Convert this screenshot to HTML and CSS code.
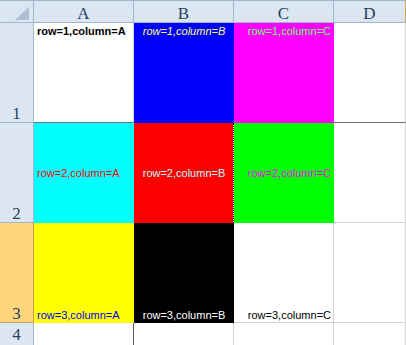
FILE: index.html
```html
<!DOCTYPE html>
<html>
  <head>
    <meta charset="utf-8">
    <title>Sheet1</title>
    <link rel="stylesheet" href="styles.css">
  </head>
  <body>
    <div class="sheet">
      <!-- column headers -->
      <div class="corner">
        <svg width="14" height="13" viewBox="0 0 14 13"><polygon points="14,0 14,13 0,13" fill="#aebfd4"/></svg>
      </div>
      <div class="col-head">A</div>
      <div class="col-head">B</div>
      <div class="col-head">C</div>
      <div class="col-head last">D</div>

      <!-- row 1 -->
      <div class="row-head">1</div>
      <div class="cell top left bold dark-bottom">row=1,column=A</div>
      <div class="cell top center italic blue">row=1,column=B</div>
      <div class="cell top right magenta">row=1,column=C</div>
      <div class="cell dark-bottom"></div>

      <!-- row 2 -->
      <div class="row-head">2</div>
      <div class="cell mid left cyan">row=2,column=A</div>
      <div class="cell mid center red ants">row=2,column=B</div>
      <div class="cell mid right green">row=2,column=C</div>
      <div class="cell"></div>

      <!-- row 3 -->
      <div class="row-head selected">3</div>
      <div class="cell bottom left yellow">row=3,column=A</div>
      <div class="cell bottom center black">row=3,column=B</div>
      <div class="cell bottom right">row=3,column=C</div>
      <div class="cell"></div>

      <!-- row 4 -->
      <div class="row-head short">4</div>
      <div class="cell dark-right"></div>
      <div class="cell"></div>
      <div class="cell"></div>
      <div class="cell"></div>
    </div>
  </body>
</html>
```

FILE: styles.css
```css
*{
  margin: 0;
  padding: 0;
  box-sizing: border-box;
}
body{
  width: 406px;
  height: 345px;
  overflow: hidden;
  background: #fff;
}
.sheet{
  display: grid;
  grid-template-columns: 34px 100px 100px 100px 72px;
  grid-template-rows: 23px 100px 100px 100px 30px;
  background: #fff;
  font-family: "Liberation Sans", Arial, sans-serif;
  font-size: 11px;
}
.corner,.col-head,.row-head{
  background: #dce6f2;
  color: #27415f;
  font-family: "Liberation Serif", "Times New Roman", serif;
  font-size: 17px;
  line-height: 1;
  border-right: 1px solid #9eb6ce;
  border-bottom: 1px solid #9eb6ce;
}
.corner,.col-head{
  border-top: 1px solid #9eb6ce;
}
.corner{
  display: flex;
  justify-content: flex-end;
  align-items: flex-end;
  padding: 0 4px 2px 0;
}
.corner svg{
  display: block;
}
.col-head{
  display: flex;
  justify-content: center;
  align-items: center;
  padding-top: 3px;
}
.col-head.last{
  border-right-color: #e0a04a;
}
.row-head{
  display: flex;
  justify-content: center;
  align-items: flex-end;
  padding-bottom: 0;
}
.row-head.selected{
  background: #ffd57c;
  border-bottom-color: #c8a05a;
  border-right-color: #c8a05a;
}
.row-head.short{
  align-items: flex-start;
  padding-top: 3px;
}
.cell{
  display: flex;
  padding: 2px 2px 0 3px;
  line-height: 13px;
  white-space: nowrap;
  color: #000;
  border-right: 1px solid #d4d4d4;
  border-bottom: 1px solid #d4d4d4;
}
.top{ align-items: flex-start; }
.mid{ align-items: center; }
.bottom{ align-items: flex-end; }
.left{ justify-content: flex-start; }
.center{ justify-content: center; }
.right{ justify-content: flex-end; }
.bold{ font-weight: bold; }
.italic{ font-style: italic; }
.dark-bottom{ border-bottom-color: #6d6d6d; }
.dark-right{ border-right-color: #5a5a5a; }

.blue{ background: #0000ff; border-color: #0000ff; color: #ffff66; }
.magenta{ background: #ff00ff; border-color: #ff00ff; color: #66ff66; }
.cyan{ background: #00ffff; border-color: #00ffff; color: #ff0000; }
.red{ background: #ff0000; border-color: #ff0000; color: #aaffff; }
.green{ background: #00ff00; border-color: #00ff00; color: #ff00ff; }
.yellow{ background: #ffff00; border-color: #ffff00; color: #0000ff; }
.black{ background: #000; border-color: #000; color: #fff; }
.ants{
  border-right: 1px dotted #000;
  background-clip: padding-box;
}
```
